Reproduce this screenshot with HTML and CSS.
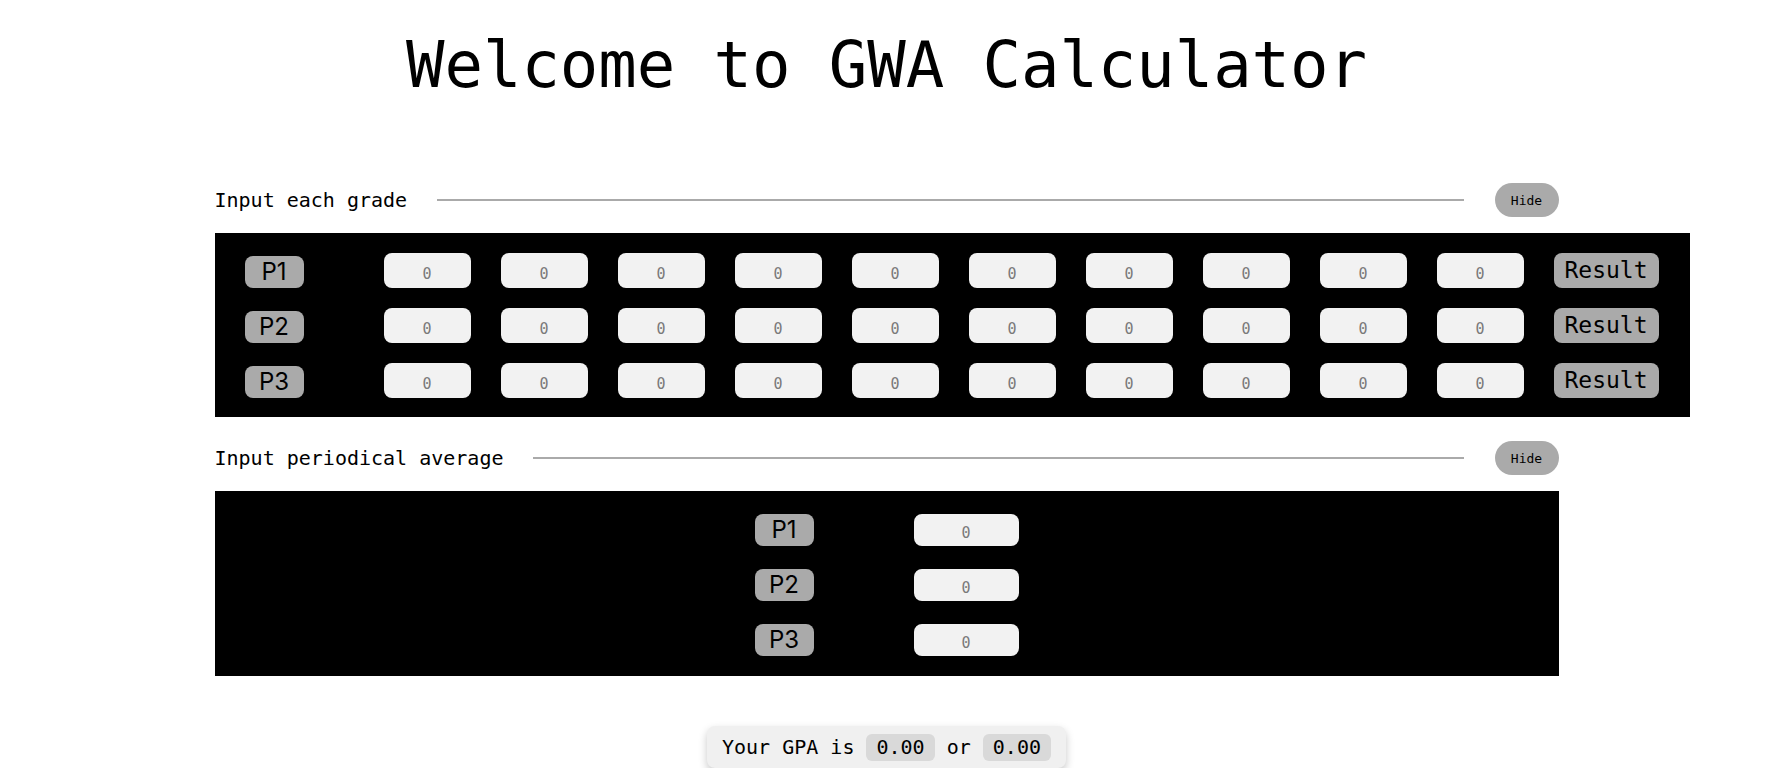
FILE: index.html
```html
<!DOCTYPE html>
<html lang="en">
<head>
<meta charset="utf-8">
<title>GWA Calculator</title>
<link rel="stylesheet" href="styles.css">
</head>
<body>
<div class="page">
  <h1 class="title">Welcome to GWA Calculator</h1>

  <div class="container">
    <div class="section-head">
      <span class="section-title">Input each grade</span>
      <span class="rule"></span>
      <button class="hide-btn">Hide</button>
    </div>

    <div class="panel panel-grades">
      <div class="grade-row">
        <span class="period">P1</span>
        <div class="grade-inputs">
          <input class="grade" placeholder="0"><input class="grade" placeholder="0"><input class="grade" placeholder="0"><input class="grade" placeholder="0"><input class="grade" placeholder="0"><input class="grade" placeholder="0"><input class="grade" placeholder="0"><input class="grade" placeholder="0"><input class="grade" placeholder="0"><input class="grade" placeholder="0">
        </div>
        <button class="result-btn">Result</button>
      </div>
      <div class="grade-row">
        <span class="period">P2</span>
        <div class="grade-inputs">
          <input class="grade" placeholder="0"><input class="grade" placeholder="0"><input class="grade" placeholder="0"><input class="grade" placeholder="0"><input class="grade" placeholder="0"><input class="grade" placeholder="0"><input class="grade" placeholder="0"><input class="grade" placeholder="0"><input class="grade" placeholder="0"><input class="grade" placeholder="0">
        </div>
        <button class="result-btn">Result</button>
      </div>
      <div class="grade-row">
        <span class="period">P3</span>
        <div class="grade-inputs">
          <input class="grade" placeholder="0"><input class="grade" placeholder="0"><input class="grade" placeholder="0"><input class="grade" placeholder="0"><input class="grade" placeholder="0"><input class="grade" placeholder="0"><input class="grade" placeholder="0"><input class="grade" placeholder="0"><input class="grade" placeholder="0"><input class="grade" placeholder="0">
        </div>
        <button class="result-btn">Result</button>
      </div>
    </div>

    <div class="section-head section-head-2">
      <span class="section-title">Input periodical average</span>
      <span class="rule"></span>
      <button class="hide-btn">Hide</button>
    </div>

    <div class="panel panel-avg">
      <div class="avg-row">
        <span class="period">P1</span>
        <input class="avg" placeholder="0">
      </div>
      <div class="avg-row">
        <span class="period">P2</span>
        <input class="avg" placeholder="0">
      </div>
      <div class="avg-row">
        <span class="period">P3</span>
        <input class="avg" placeholder="0">
      </div>
    </div>
  </div>

  <div class="gpa-wrap">
    <div class="gpa">Your GPA is <span class="chip">0.00</span> or <span class="chip">0.00</span></div>
  </div>
</div>
</body>
</html>
```

FILE: styles.css
```css
* {
  box-sizing: border-box;
}

html, body {
  margin: 0;
  padding: 0;
  background: #ffffff;
  color: #000000;
  font-family: "DejaVu Sans Mono", "Liberation Mono", monospace;
}

.page {
  width: 1773px;
}

.title {
  margin: 27px 0 0;
  font-family: "DejaVu Sans Mono", "Liberation Mono", monospace;
  font-weight: normal;
  font-size: 64px;
  line-height: 76px;
  text-align: center;
  letter-spacing: -0.1px;
}

.container {
  width: 1344px;
  margin: 0 auto;
}

.section-head {
  display: flex;
  align-items: center;
  height: 34px;
  margin-top: 80px;
}

.section-head-2 {
  margin-top: 24px;
}

.section-title {
  font-size: 20px;
  white-space: nowrap;
}

.rule {
  flex: 1;
  height: 2px;
  background: #aaaaaa;
  margin: 0 31px 0 30px;
}

.hide-btn {
  width: 64px;
  height: 34px;
  border: none;
  border-radius: 17px;
  background: #aaaaaa;
  color: #000;
  font-family: "DejaVu Sans Mono", "Liberation Mono", monospace;
  font-size: 13px;
  padding: 0;
}

.panel {
  background: #000000;
  margin-top: 16px;
}

.panel-grades {
  width: max-content;
  padding: 20px 31px 19px 30px;
  display: flex;
  flex-direction: column;
  gap: 20px;
}

.grade-row {
  display: flex;
  align-items: flex-end;
}

.period {
  display: inline-block;
  width: 59px;
  height: 32px;
  line-height: 32px;
  text-align: center;
  background: #aaaaaa;
  border-radius: 8px;
  font-family: "Inter", "Roboto", sans-serif;
  font-size: 24px;
  color: #000;
}

.grade-inputs {
  display: flex;
  gap: 30px;
  margin: 0 30px 0 80px;
}

.grade,
.avg {
  border: none;
  outline: none;
  background: #f2f2f2;
  border-radius: 8px;
  padding: 6px 0 0;
  text-align: center;
  font-family: "DejaVu Sans Mono", "Liberation Mono", monospace;
  font-size: 15px;
  color: #000;
}

.grade::placeholder,
.avg::placeholder {
  color: #7a7a7a;
}

.grade {
  width: 87px;
  height: 35px;
}

.result-btn {
  width: 105px;
  height: 35px;
  border: none;
  border-radius: 8px;
  background: #aaaaaa;
  color: #000;
  font-family: "DejaVu Sans Mono", "Liberation Mono", monospace;
  font-size: 23px;
  padding: 0;
  line-height: 33px;
}

.panel-avg {
  width: 100%;
  padding: 23px 0 20px;
  display: flex;
  flex-direction: column;
  align-items: center;
  gap: 23px;
}

.avg-row {
  display: flex;
  align-items: center;
  gap: 100px;
}

.avg {
  width: 105px;
  height: 32px;
}

.gpa-wrap {
  display: flex;
  justify-content: center;
  margin-top: 50px;
}

.gpa {
  display: flex;
  align-items: center;
  white-space: pre;
  height: 42px;
  padding: 0 15px;
  background: #f0f0f0;
  border-radius: 8px;
  box-shadow: 0 4px 8px rgba(0, 0, 0, 0.22);
  font-size: 20px;
}

.chip {
  display: inline-block;
  height: 27px;
  line-height: 27px;
  padding: 0 10px;
  background: #d9d9d9;
  border-radius: 6px;
}
```
